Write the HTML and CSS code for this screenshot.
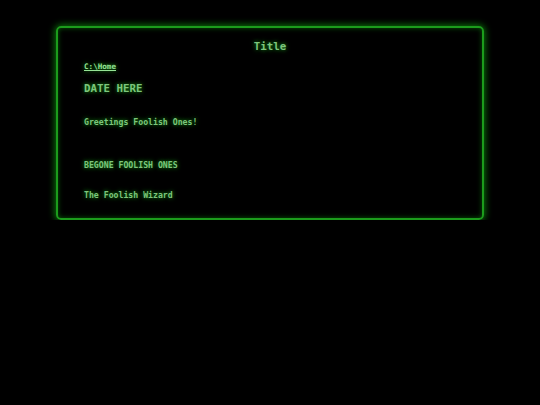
FILE: index.html
```html
<!DOCTYPE html>
<html lang="en">
<head>
<meta charset="utf-8">
<title>Title</title>
<link rel="stylesheet" href="styles.css">
</head>
<body>
<main class="terminal">
  <h1 class="title">Title</h1>
  <a class="path" href="#">C:\Home</a>
  <h2 class="date">DATE HERE</h2>
  <p class="line greeting">Greetings Foolish Ones!</p>
  <p class="line begone">BEGONE FOOLISH ONES</p>
  <p class="line sign">The Foolish Wizard</p>
</main>
</body>
</html>
```
FILE: styles.css
```css
html, body {
  margin: 0;
  padding: 0;
  background: #000;
}
body {
  font-family: "DejaVu Sans Mono", "Liberation Mono", monospace;
  font-weight: bold;
  color: #7cc67c;
  padding-top: 26px;
}
.terminal {
  box-sizing: border-box;
  width: 428px;
  margin: 0 auto;
  border: 2px solid #1c9c1c;
  border-radius: 5px;
  box-shadow: 0 0 7px 1px #0a7a0a, inset 0 0 5px #075a07;
  padding: 10.5px 26px 17px 26px;
  display: flex;
  flex-direction: column;
  align-items: flex-start;
  text-shadow: 0 0 4px rgba(30, 200, 30, 0.8);
}
.title {
  align-self: stretch;
  text-align: center;
  margin: 0;
  font-size: 10.8px;
  line-height: 16px;
  font-weight: bold;
}
.path {
  margin-top: 6.5px;
  font-size: 7.6px;
  line-height: 12px;
  color: #96e496;
  text-decoration: underline;
}
.date {
  margin: 8.3px 0 0 0;
  font-size: 10.8px;
  line-height: 16px;
  font-weight: bold;
}
.line {
  margin: 0;
  font-size: 8.2px;
  line-height: 12px;
}
.greeting { margin-top: 18.5px; }
.begone { margin-top: 31.5px; }
.sign { margin-top: 17.5px; }
```
